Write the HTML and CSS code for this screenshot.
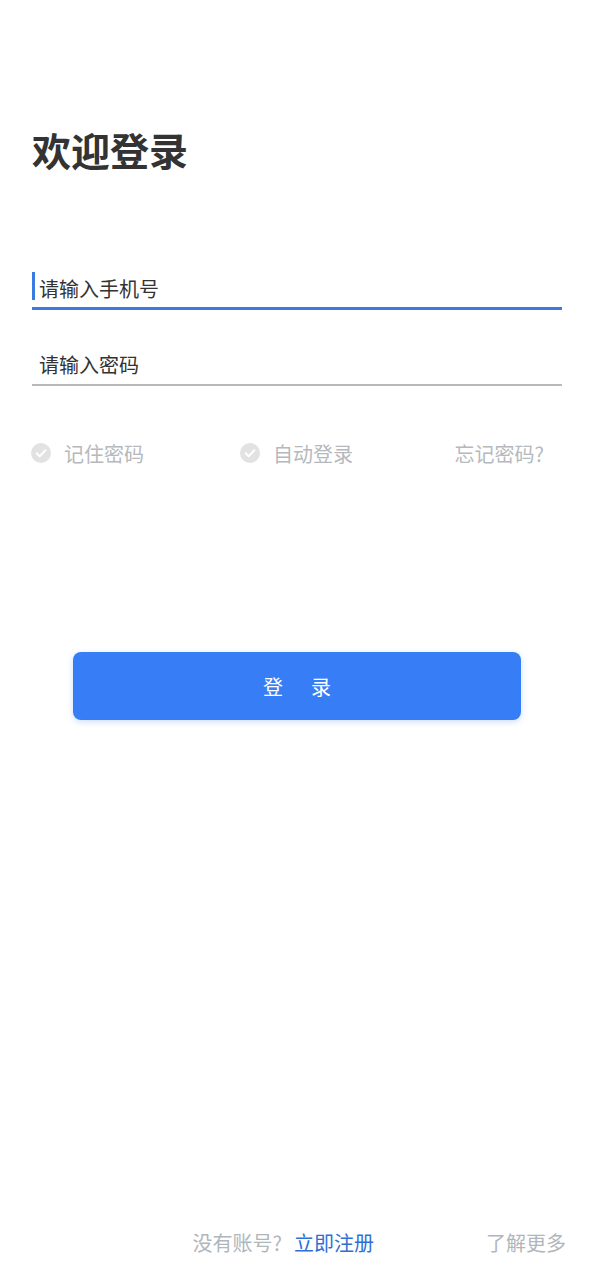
FILE: index.html
```html
<!DOCTYPE html>
<html lang="zh-CN">
<head>
<meta charset="utf-8">
<title>欢迎登录</title>
<link rel="stylesheet" href="styles.css">
</head>
<body>
<div class="page">
  <h1 class="title">欢迎登录</h1>
  <div class="field field-active">
    <span class="caret"></span>
    <input class="input" type="text" placeholder="请输入手机号">
  </div>
  <div class="field">
    <input class="input" type="password" placeholder="请输入密码">
  </div>
  <div class="options">
    <label class="check">
      <svg class="check-icon" viewBox="0 0 20 20" width="20" height="20"><circle cx="10" cy="10" r="10" fill="#e2e2e2"/><path d="M5.6 10.3 L8.7 13.2 L14.4 7.2" fill="none" stroke="#fff" stroke-width="2" stroke-linecap="round" stroke-linejoin="round"/></svg>
      <span>记住密码</span>
    </label>
    <label class="check">
      <svg class="check-icon" viewBox="0 0 20 20" width="20" height="20"><circle cx="10" cy="10" r="10" fill="#e2e2e2"/><path d="M5.6 10.3 L8.7 13.2 L14.4 7.2" fill="none" stroke="#fff" stroke-width="2" stroke-linecap="round" stroke-linejoin="round"/></svg>
      <span>自动登录</span>
    </label>
    <a class="forgot">忘记密码?</a>
  </div>
  <div class="btn-wrap">
    <button class="btn" type="button">登<span class="btn-gap"></span>录</button>
  </div>
  <div class="footer">
    <div class="signup"><span class="muted">没有账号?</span><a class="link">立即注册</a></div>
    <a class="muted more">了解更多</a>
  </div>
</div>
</body>
</html>
```

FILE: styles.css
```css
* { box-sizing: border-box; }
html, body { margin: 0; padding: 0; background: #fff; }
body {
  font-family: "Noto Sans CJK SC", "Noto Sans", sans-serif;
  color: #333;
}
.page {
  min-height: 1280px;
  display: flex;
  flex-direction: column;
  padding: 121px 32px 22px 32px;
}
.title {
  margin: 0;
  font-size: 39px;
  line-height: 56px;
  font-weight: 700;
  color: #333;
}
.field {
  display: flex;
  align-items: center;
  height: 40px;
  border-bottom: 2px solid #b9b9b9;
}
.field-active {
  margin-top: 93px;
  border-bottom: 3px solid #3a7be0;
}
.field + .field { margin-top: 35px; height: 41px; border-bottom-width: 2px; }
.caret {
  width: 3px;
  height: 28px;
  background: #3a7be0;
  margin-right: 4px;
  margin-top: -5px;
}
.input {
  flex: 1;
  border: 0;
  outline: 0;
  padding: 0 0 0 7px;
  font: inherit;
  font-size: 20px;
  color: #333;
  background: transparent;
}
.field-active .input { padding-left: 0; }
.input::placeholder { color: #333; }
.options {
  display: flex;
  align-items: center;
  margin-top: 47px;
  height: 40px;
  font-size: 20px;
  color: #b5b9bd;
}
.check {
  display: flex;
  align-items: center;
  gap: 13px;
  width: 209px;
}
.check-icon { display: block; margin-left: -1px; }
.forgot { margin-left: auto; margin-right: 18px; color: #b5b9bd; }
.btn-wrap {
  display: flex;
  justify-content: center;
  margin-top: 179px;
}
.btn {
  width: 448px;
  height: 68px;
  border: 0;
  border-radius: 8px;
  background: #377ef6;
  color: #fff;
  font: inherit;
  font-size: 20px;
  box-shadow: 0 2px 6px rgba(55, 126, 246, 0.25);
  display: flex;
  align-items: center;
  justify-content: center;
}
.btn-gap { display: inline-block; width: 28px; }
.footer {
  margin-top: auto;
  display: flex;
  justify-content: flex-end;
  align-items: center;
  gap: 112px;
  margin-right: -4px;
  font-size: 20px;
  line-height: 30px;
}
.signup { display: flex; align-items: center; }
.muted { color: #b0b6bc; }
.link { color: #2f6fd6; margin-left: 12px; }
```
